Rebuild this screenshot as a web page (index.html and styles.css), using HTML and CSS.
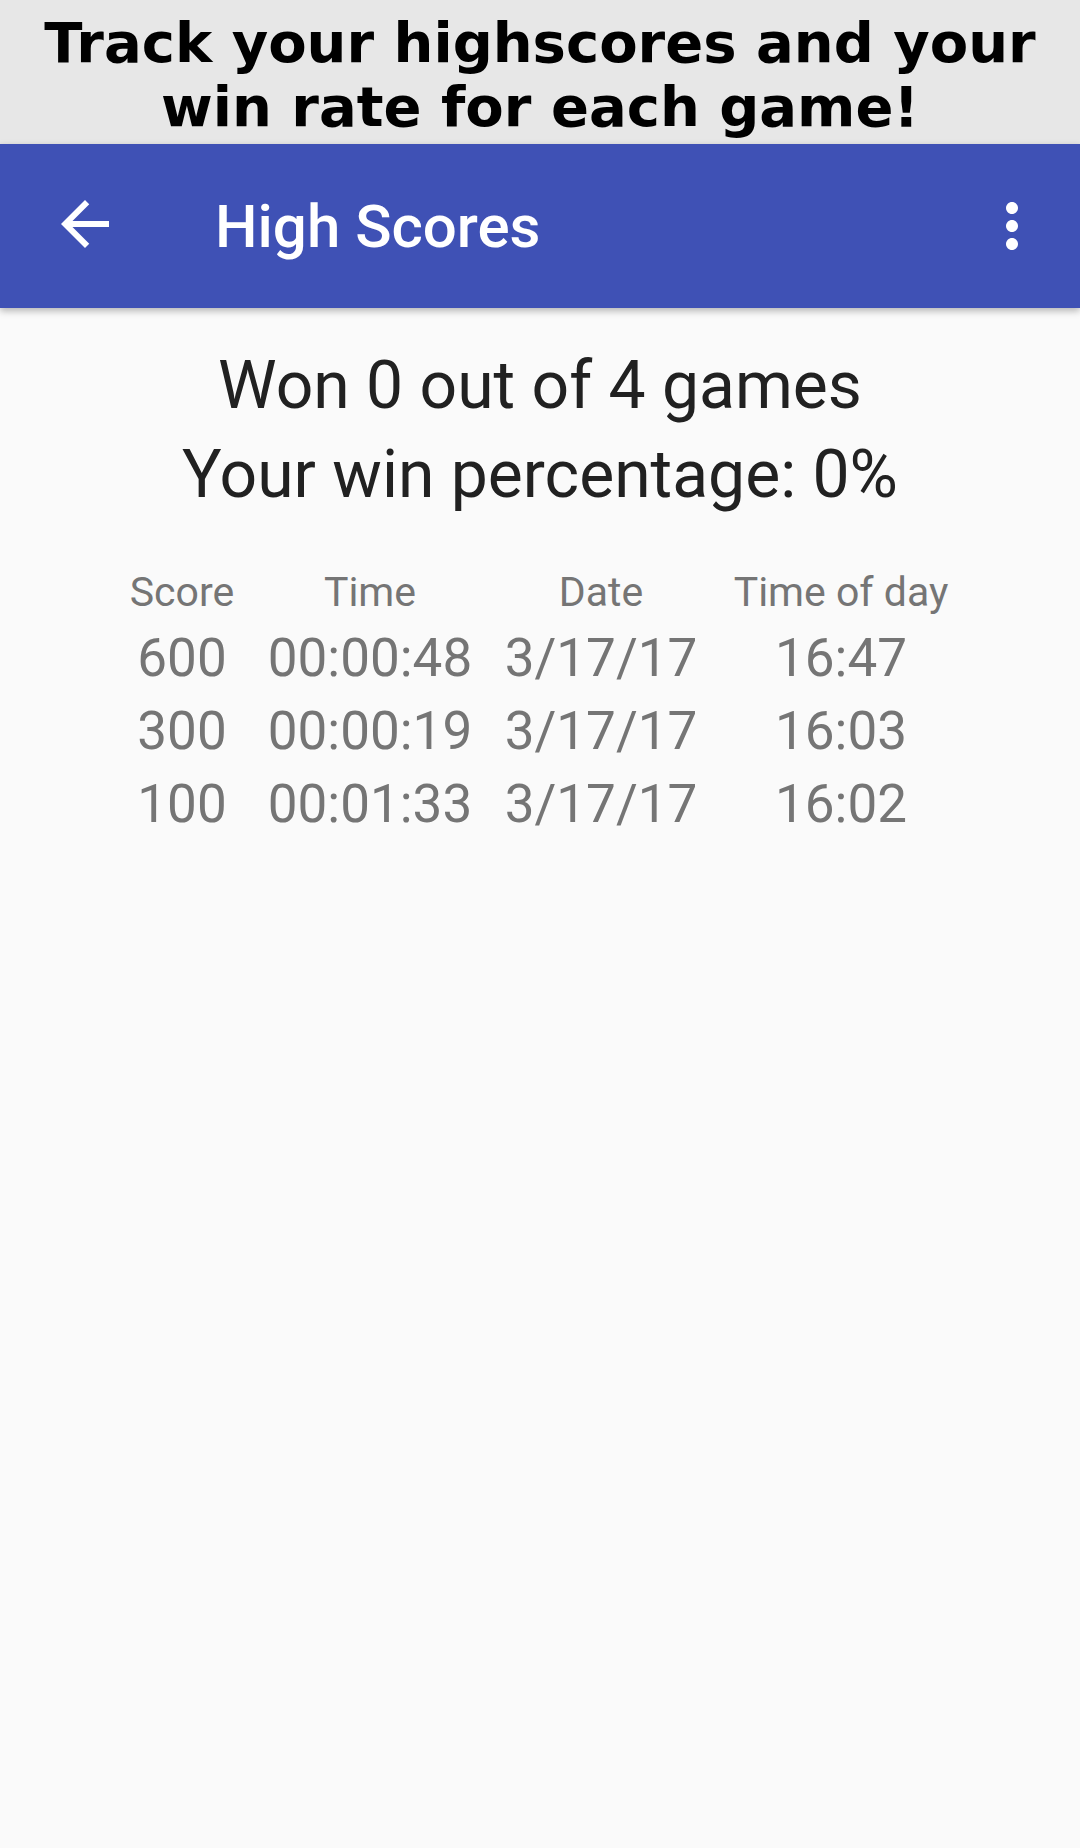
FILE: index.html
```html
<!DOCTYPE html>
<html lang="en">
<head>
<meta charset="utf-8">
<title>High Scores</title>
<link rel="stylesheet" href="styles.css">
</head>
<body>
<div class="screen">
  <header class="caption">Track your highscores and your<br>win rate for each game!</header>
  <div class="appbar">
    <svg class="icon back" viewBox="0 0 24 24" width="72" height="72"><path fill="#fff" d="M20 11H7.83l5.59-5.59L12 4l-8 8 8 8 1.41-1.41L7.83 13H20v-2z"/></svg>
    <div class="title">High Scores</div>
    <div class="spacer"></div>
    <svg class="icon more" viewBox="0 0 24 24" width="72" height="72"><path fill="#fff" d="M12 8c1.1 0 2-.9 2-2s-.9-2-2-2-2 .9-2 2 .9 2 2 2zm0 2c-1.1 0-2 .9-2 2s.9 2 2 2 2-.9 2-2-.9-2-2-2zm0 6c-1.1 0-2 .9-2 2s.9 2 2 2 2-.9 2-2-.9-2-2-2z"/></svg>
  </div>
  <main class="content">
    <div class="summary">
      <div class="line">Won 0 out of 4 games</div>
      <div class="line">Your win percentage: 0%</div>
    </div>
    <div class="scores">
      <div class="head">Score</div>
      <div class="head">Time</div>
      <div class="head">Date</div>
      <div class="head">Time of day</div>

      <div class="cell">600</div>
      <div class="cell">00:00:48</div>
      <div class="cell">3/17/17</div>
      <div class="cell">16:47</div>

      <div class="cell">300</div>
      <div class="cell">00:00:19</div>
      <div class="cell">3/17/17</div>
      <div class="cell">16:03</div>

      <div class="cell">100</div>
      <div class="cell">00:01:33</div>
      <div class="cell">3/17/17</div>
      <div class="cell">16:02</div>
    </div>
  </main>
</div>
</body>
</html>
```

FILE: styles.css
```css
html, body {
  margin: 0;
  padding: 0;
  background: #fafafa;
}

.screen {
  width: 1080px;
  height: 1848px;
  display: flex;
  flex-direction: column;
  background: #fafafa;
  overflow: hidden;
}

.caption {
  background: #e7e7e7;
  color: #000;
  font-family: "DejaVu Sans", sans-serif;
  font-weight: bold;
  font-size: 56px;
  line-height: 64px;
  text-align: center;
  padding: 11px 0 5px;
  height: 128px;
}

.appbar {
  height: 164px;
  background: #3f51b5;
  display: flex;
  align-items: center;
  padding: 0 32px 0 49px;
  box-shadow: 0 3px 7px rgba(0, 0, 0, 0.28);
  position: relative;
  z-index: 1;
}

.icon {
  display: block;
  flex: none;
}

.back {
  margin-top: -4px;
}

.title {
  margin-left: 94px;
  color: #fff;
  font-family: Roboto, "Liberation Sans", sans-serif;
  font-weight: 500;
  font-size: 60px;
}

.spacer {
  flex: 1;
}

.content {
  flex: 1;
  padding-top: 33px;
}

.summary {
  text-align: center;
  color: #212121;
  font-family: Roboto, "Liberation Sans", sans-serif;
  font-size: 66px;
  line-height: 89px;
}

.scores {
  display: grid;
  grid-template-columns: 140px 236px 226px 254px;
  justify-content: center;
  margin-top: 51px;
  font-family: Roboto, "Liberation Sans", sans-serif;
  color: #757575;
  text-align: center;
}

.head {
  font-size: 41px;
  line-height: 44px;
  margin-bottom: 8px;
}

.cell {
  font-size: 53px;
  line-height: 73px;
}
```
